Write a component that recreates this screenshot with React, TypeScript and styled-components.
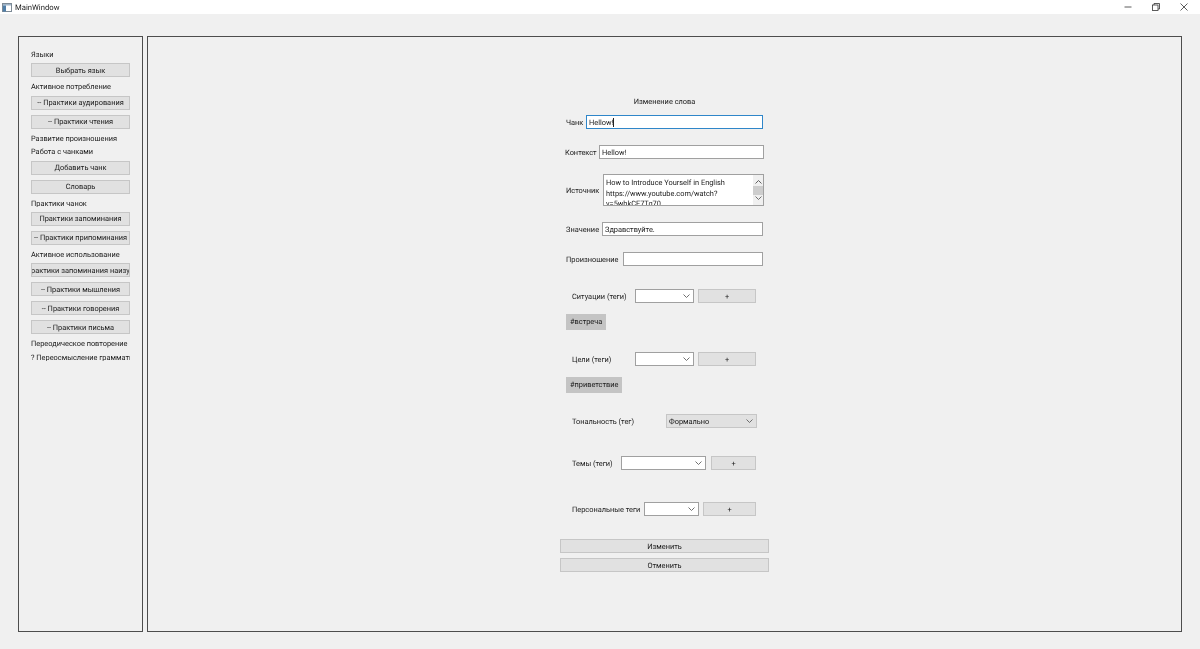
import styled, { createGlobalStyle } from "styled-components";

const GlobalStyle = createGlobalStyle`
    html, body {
        margin: 0;
        padding: 0;
        background: #f0f0f0;
    }
    * {
        box-sizing: border-box;
    }
`;

const Window = styled.div`
    display: flex;
    flex-direction: column;
    width: 1200px;
    height: 649px;
    overflow: hidden;
    background: #f0f0f0;
    color: #1a1a1a;
    font-family: Roboto, "Open Sans", sans-serif;
    font-size: 7.4px;
    font-variant-ligatures: none;
    text-rendering: geometricPrecision;
    filter: blur(0.25px);
`;

const TitleBar = styled.div`
    display: flex;
    align-items: center;
    flex: none;
    height: 14px;
    padding: 0 2px;
    background: #fff;
    font-size: 7.7px;
`;

const TitleText = styled.span`
    margin-left: 3px;
`;

const WindowControls = styled.div`
    display: flex;
    margin-left: auto;
`;

const ControlButton = styled.div`
    display: flex;
    align-items: center;
    justify-content: center;
    width: 28px;
    height: 14px;
`;

const Body = styled.div`
    display: flex;
    gap: 4px;
    padding: 22px 18px 17px;
    flex: 1;
`;

const Sidebar = styled.div`
    display: flex;
    flex-direction: column;
    gap: 5px;
    width: 125px;
    height: 596px;
    padding: 13px 12px 0;
    border: 1px solid #4d4d4d;
`;

const SideLabel = styled.div`
    flex: none;
    height: 8.4px;
    line-height: 10px;
    white-space: nowrap;
    overflow: hidden;
`;

const Button = styled.div<{ $w?: number; $gap?: number }>`
    display: flex;
    align-items: center;
    justify-content: center;
    flex: none;
    width: ${(p) => (p.$w ? `${p.$w}px` : "100%")};
    height: 14px;
    margin-left: ${(p) => p.$gap ?? 0}px;
    overflow: hidden;
    white-space: nowrap;
    background: #e1e1e1;
    border: 1px solid #c6c6c6;
`;

const Main = styled.div`
    display: flex;
    justify-content: center;
    flex: 1;
    height: 596px;
    border: 1px solid #4d4d4d;
`;

const Form = styled.div`
    display: flex;
    flex-direction: column;
    width: 209px;
    padding-top: 60px;
`;

const Title = styled.div`
    height: 10px;
    line-height: 10px;
    text-align: center;
`;

const Row = styled.div<{ $top: number; $left?: number; $right?: number; $h?: number }>`
    display: flex;
    align-items: center;
    flex: none;
    height: ${(p) => p.$h ?? 14}px;
    margin-top: ${(p) => p.$top}px;
    padding-left: ${(p) => p.$left ?? 6}px;
    padding-right: ${(p) => p.$right ?? 5}px;
    white-space: nowrap;
`;

const Input = styled.div<{ $w: number; $focused?: boolean }>`
    display: flex;
    align-items: center;
    flex: none;
    width: ${(p) => p.$w}px;
    height: 14px;
    margin-left: auto;
    padding-left: 2px;
    background: #fff;
    border: 1px solid ${(p) => (p.$focused ? "#2f86c9" : "#a0a0a0")};
`;

const Caret = styled.span`
    display: inline-block;
    width: 1px;
    height: 9px;
    background: #222;
`;

const TextArea = styled.div`
    display: flex;
    flex: none;
    width: 161px;
    height: 32px;
    margin-left: auto;
    background: #fff;
    border: 1px solid #a0a0a0;
`;

const TextAreaBody = styled.div`
    flex: 1;
    padding: 3px 2px 0;
    overflow: hidden;
    line-height: 10.5px;
`;

const ScrollBar = styled.div`
    display: flex;
    flex-direction: column;
    align-items: center;
    justify-content: space-between;
    flex: none;
    width: 10px;
    padding: 5px 0;
    background: #f0f0f0;
`;

const ScrollThumb = styled.div`
    width: 100%;
    height: 9px;
    background: #cdcdcd;
`;

const Combo = styled.div<{ $w: number; $flat?: boolean }>`
    display: flex;
    align-items: center;
    justify-content: space-between;
    flex: none;
    width: ${(p) => p.$w}px;
    height: 14px;
    padding: 0 3px 0 2px;
    background: ${(p) => (p.$flat ? "#e1e1e1" : "#fff")};
    border: 1px solid ${(p) => (p.$flat ? "#c6c6c6" : "#a0a0a0")};
`;

const Spacer = styled.div`
    flex: 1;
`;

const Tag = styled.div<{ $top: number }>`
    align-self: flex-start;
    height: 16px;
    line-height: 16px;
    margin-top: ${(p) => p.$top}px;
    margin-left: 6px;
    padding: 0 4px;
    background: #c4c4c4;
`;

const ActionStack = styled.div`
    display: flex;
    flex-direction: column;
    gap: 5px;
    margin-top: 23px;
`;

function Chevron() {
    return (
        <svg width="7" height="4" viewBox="0 0 7 4" fill="none" stroke="#606060" strokeWidth="0.9">
            <path d="M0.5 0.5 L3.5 3.5 L6.5 0.5" />
        </svg>
    );
}

const sideItems: { kind: "label" | "button"; text: string }[] = [
    { kind: "label", text: "Языки" },
    { kind: "button", text: "Выбрать язык" },
    { kind: "label", text: "Активное потребление" },
    { kind: "button", text: "-- Практики аудирования" },
    { kind: "button", text: "-- Практики чтения" },
    { kind: "label", text: "Развитие произношения" },
    { kind: "label", text: "Работа с чанками" },
    { kind: "button", text: "Добавить чанк" },
    { kind: "button", text: "Словарь" },
    { kind: "label", text: "Практики чанок" },
    { kind: "button", text: "Практики запоминания" },
    { kind: "button", text: "-- Практики припоминания" },
    { kind: "label", text: "Активное использование" },
    { kind: "button", text: "-- Практики запоминания наизусть" },
    { kind: "button", text: "-- Практики мышления" },
    { kind: "button", text: "-- Практики говорения" },
    { kind: "button", text: "-- Практики письма" },
    { kind: "label", text: "Переодическое повторение" },
    { kind: "label", text: "? Переосмысление грамматики" },
];

function App() {
    return (
        <Window>
            <GlobalStyle />
            <TitleBar>
                <svg width="10" height="9" viewBox="0 0 10 9">
                    <rect x="0.5" y="0.5" width="9" height="8" fill="#fff" stroke="#7d8a96" />
                    <rect x="1" y="1" width="8" height="1.5" fill="#9fb4c8" />
                    <rect x="1" y="2.5" width="3" height="6" fill="#4f7ea8" />
                </svg>
                <TitleText>MainWindow</TitleText>
                <WindowControls>
                    <ControlButton>
                        <svg width="8" height="8" viewBox="0 0 8 8" stroke="#333" strokeWidth="0.8">
                            <path d="M0.5 4 H7.5" />
                        </svg>
                    </ControlButton>
                    <ControlButton>
                        <svg width="8" height="8" viewBox="0 0 8 8" fill="none" stroke="#333" strokeWidth="0.8">
                            <rect x="0.5" y="2" width="5.5" height="5.5" />
                            <path d="M2 2 V0.5 H7.5 V6 H6" />
                        </svg>
                    </ControlButton>
                    <ControlButton>
                        <svg width="8" height="8" viewBox="0 0 8 8" stroke="#333" strokeWidth="0.8">
                            <path d="M0.5 0.5 L7.5 7.5 M7.5 0.5 L0.5 7.5" />
                        </svg>
                    </ControlButton>
                </WindowControls>
            </TitleBar>
            <Body>
                <Sidebar>
                    {sideItems.map((item) =>
                        item.kind === "label" ? (
                            <SideLabel key={item.text}>{item.text}</SideLabel>
                        ) : (
                            <Button key={item.text}>{item.text}</Button>
                        )
                    )}
                </Sidebar>
                <Main>
                    <Form>
                        <Title>Изменение слова</Title>
                        <Row $top={8} $right={6}>
                            Чанк
                            <Input $w={177} $focused>
                                Hellow!
                                <Caret />
                            </Input>
                        </Row>
                        <Row $top={16} $left={5}>
                            Контекст
                            <Input $w={165}>Hellow!</Input>
                        </Row>
                        <Row $top={15} $h={32}>
                            Источник
                            <TextArea>
                                <TextAreaBody>
                                    How to Introduce Yourself in English
                                    <br />
                                    https://www.youtube.com/watch?
                                    <br />
                                    v=5whkCE7Tq70
                                </TextAreaBody>
                                <ScrollBar>
                                    <svg width="7" height="4" viewBox="0 0 7 4" fill="none" stroke="#505050" strokeWidth="0.9">
                                        <path d="M0.5 3.5 L3.5 0.5 L6.5 3.5" />
                                    </svg>
                                    <ScrollThumb />
                                    <Chevron />
                                </ScrollBar>
                            </TextArea>
                        </Row>
                        <Row $top={16} $right={6}>
                            Значение
                            <Input $w={161}>Здравствуйте.</Input>
                        </Row>
                        <Row $top={16} $right={6}>
                            Произношение
                            <Input $w={140} />
                        </Row>
                        <Row $top={23} $left={12} $right={13}>
                            Ситуации (теги)
                            <Spacer />
                            <Combo $w={59}>
                                <span />
                                <Chevron />
                            </Combo>
                            <Button $w={58} $gap={4}>+</Button>
                        </Row>
                        <Tag $top={11}>#встреча</Tag>
                        <Row $top={22} $left={12} $right={13}>
                            Цели (теги)
                            <Spacer />
                            <Combo $w={59}>
                                <span />
                                <Chevron />
                            </Combo>
                            <Button $w={58} $gap={4}>+</Button>
                        </Row>
                        <Tag $top={11}>#приветствие</Tag>
                        <Row $top={21} $left={12} $right={12}>
                            Тональность (тег)
                            <Spacer />
                            <Combo $w={91} $flat>
                                Формально
                                <Chevron />
                            </Combo>
                        </Row>
                        <Row $top={28} $left={12} $right={13}>
                            Темы (теги)
                            <Spacer />
                            <Combo $w={85}>
                                <span />
                                <Chevron />
                            </Combo>
                            <Button $w={45} $gap={5}>+</Button>
                        </Row>
                        <Row $top={32} $left={12} $right={13}>
                            Персональные теги
                            <Spacer />
                            <Combo $w={55}>
                                <span />
                                <Chevron />
                            </Combo>
                            <Button $w={53} $gap={4}>+</Button>
                        </Row>
                        <ActionStack>
                            <Button>Изменить</Button>
                            <Button>Отменить</Button>
                        </ActionStack>
                    </Form>
                </Main>
            </Body>
        </Window>
    );
}

export default App;
